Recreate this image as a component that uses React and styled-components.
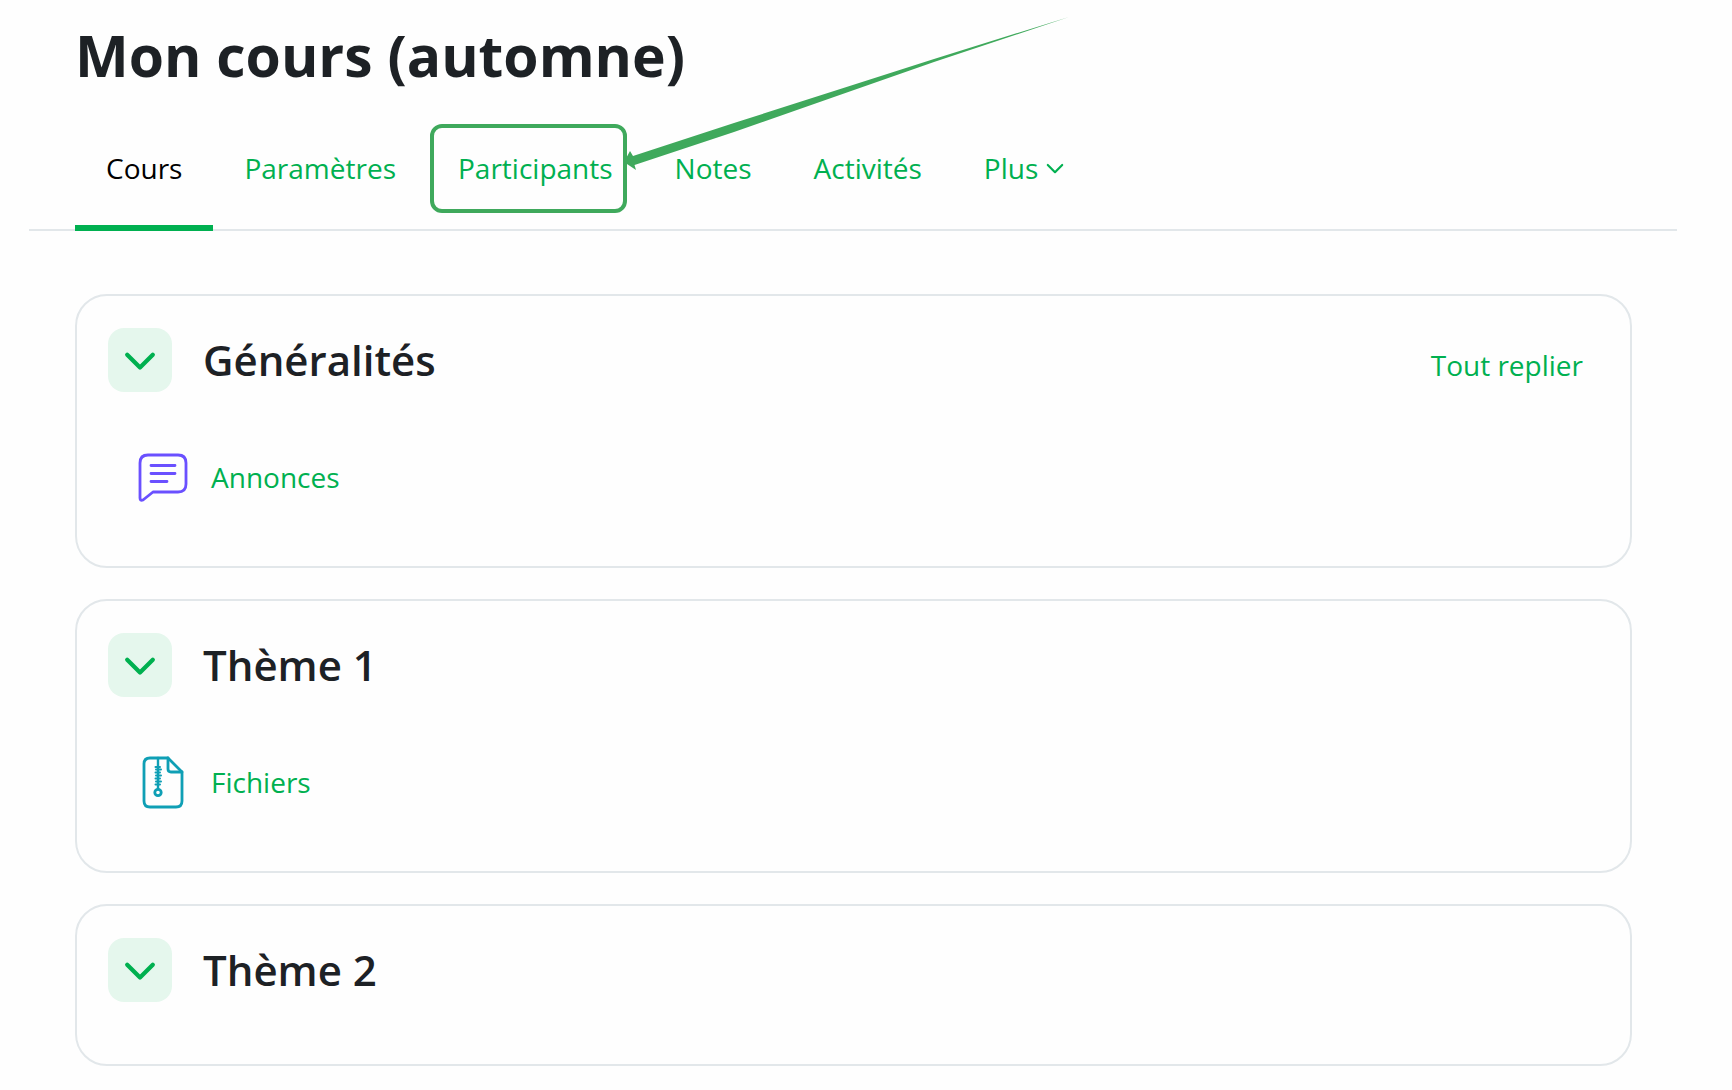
import React, { useState } from "react";
import styled, { createGlobalStyle } from "styled-components";

const GlobalStyle = createGlobalStyle`
  *, *::before, *::after { box-sizing: border-box; }
  body {
    margin: 0;
    background: #fefefe;
    color: #1d2125;
    font-family: "Segoe UI", "Open Sans", "Noto Sans", sans-serif;
    font-size: 28px;
    line-height: 44px;
  }
`;

const green = "#00b050";
const line = "#e2e7ea";
const marker = "#3fa95c";

const Page = styled.div`
  padding: 15px 55px 24px 29px;
`;

const Title = styled.h1`
  margin: 0;
  padding: 0 46px;
  font-size: 57px;
  font-weight: 700;
  line-height: 80px;
`;

const TabBar = styled.nav`
  display: flex;
  margin-top: 11px;
  padding: 0 46px;
  box-shadow: inset 0 -2px 0 ${line};
`;

const Tab = styled.a`
  position: relative;
  display: flex;
  align-items: center;
  gap: 8px;
  padding: 40px 31px 35px;
  border-bottom: 6px solid ${(p) => (p.$active ? green : "transparent")};
  color: ${(p) => (p.$active ? "#000" : green)};
  text-decoration: none;
  white-space: nowrap;
`;

const Highlight = styled.span`
  position: absolute;
  inset: 18px 17px 12px 3px;
  border: 4px solid ${marker};
  border-radius: 12px;
  pointer-events: none;
`;

const Arrow = styled.svg`
  position: absolute;
  left: 100%;
  bottom: 28px;
  width: 448px;
  height: 160px;
  overflow: visible;
`;

const Sections = styled.main`
  display: grid;
  gap: 31px;
  margin-top: 63px;
  padding: 0 45px 0 46px;
`;

const Card = styled.section`
  padding: 31px 47px 61px 31px;
  border: 2px solid ${line};
  border-radius: 32px;
`;

const CardHead = styled.header`
  display: flex;
  align-items: center;
  gap: 31px;
`;

const Toggle = styled.button`
  display: grid;
  place-items: center;
  width: 64px;
  height: 64px;
  padding: 0;
  border: 0;
  border-radius: 16px;
  background: #e5f7ed;
  color: ${green};
  cursor: pointer;
`;

const Heading = styled.h2`
  flex: 1;
  margin: 0;
  font-size: 42px;
  font-weight: 600;
  line-height: 66px;
`;

const TextButton = styled.button`
  padding: 10px 0 0;
  border: 0;
  background: none;
  color: ${green};
  font: inherit;
  cursor: pointer;
`;

const Activity = styled.div`
  display: flex;
  align-items: center;
  gap: 20px;
  margin-top: 56px;
  padding-left: 27px;
`;

const ActivityLink = styled.a`
  color: ${green};
  text-decoration: none;
`;

const ActivityIcon = styled.svg`
  display: block;
  width: 56px;
  height: 56px;
`;

function Chevron({ width, stroke }) {
  return (
    <svg width={width} height={width} viewBox="0 0 30 30" fill="none" stroke="currentColor" strokeWidth={stroke} strokeLinecap="round" strokeLinejoin="round" aria-hidden="true">
      <path d="M3 10 15 22 27 10" />
    </svg>
  );
}

function ForumIcon() {
  return (
    <ActivityIcon viewBox="0 -1 56 56" fill="none" stroke="#6a50ff" strokeWidth="2.8" strokeLinecap="round" strokeLinejoin="round" aria-hidden="true">
      <path d="M13 5H43Q51 5 51 13V34Q51 42 43 42H18L8 50Q5 51 5 48V13Q5 5 13 5Z" />
      <path d="M16 15.500H40M16 23.500H40M16 31.500H32" />
    </ActivityIcon>
  );
}

function ArchiveIcon() {
  return (
    <ActivityIcon viewBox="0 0 56 56" fill="none" stroke="#0f9fb5" strokeWidth="2.8" strokeLinecap="round" strokeLinejoin="round" aria-hidden="true">
      <path d="M15 4H33L47 18V47Q47 53 41 53H15Q9 53 9 47V10Q9 4 15 4Z" />
      <path d="M33 4V15Q33 18 36 18H47" />
      <path d="M23 4V35" strokeWidth="2.4" />
      <path d="M20.500 13H25M21 15.500H26M20.500 18.500H25M21 21.500H26M20.500 24.500H25M21 27.500H26M20.500 30.500H25" strokeWidth="2" />
      <circle cx="23" cy="38.500" r="3.200" />
    </ActivityIcon>
  );
}

function Section({ title, action, icon, link }) {
  const [open, setOpen] = useState(true);
  return (
    <Card>
      <CardHead>
        <Toggle type="button" aria-label={title} aria-expanded={open} onClick={() => setOpen(!open)}>
          <Chevron width={32} stroke={4} />
        </Toggle>
        <Heading>{title}</Heading>
        {action && <TextButton type="button">{action}</TextButton>}
      </CardHead>
      {open && link && (
        <Activity>
          {icon}
          <ActivityLink href="#">{link}</ActivityLink>
        </Activity>
      )}
    </Card>
  );
}

export default function App() {
  return (
    <>
      <GlobalStyle />
      <Page>
        <Title>Mon cours (automne)</Title>
        <TabBar>
          <Tab href="#" $active aria-current="page">Cours</Tab>
          <Tab href="#">Paramètres</Tab>
          <Tab href="#">
            Participants
            <Highlight>
              <Arrow viewBox="0 0 448 160" fill={marker} aria-hidden="true">
                <path d="M1 141 7 130 10 135 111 102 211 70 311 38 446 -4 311 41 211 76 111 111 11.500 144 13 149Z" />
              </Arrow>
            </Highlight>
          </Tab>
          <Tab href="#">Notes</Tab>
          <Tab href="#">Activités</Tab>
          <Tab href="#">
            Plus
            <Chevron width={18} stroke={3.6} />
          </Tab>
        </TabBar>
        <Sections>
          <Section title="Généralités" action="Tout replier" icon={<ForumIcon />} link="Annonces" />
          <Section title="Thème 1" icon={<ArchiveIcon />} link="Fichiers" />
          <Section title="Thème 2" />
        </Sections>
      </Page>
    </>
  );
}
